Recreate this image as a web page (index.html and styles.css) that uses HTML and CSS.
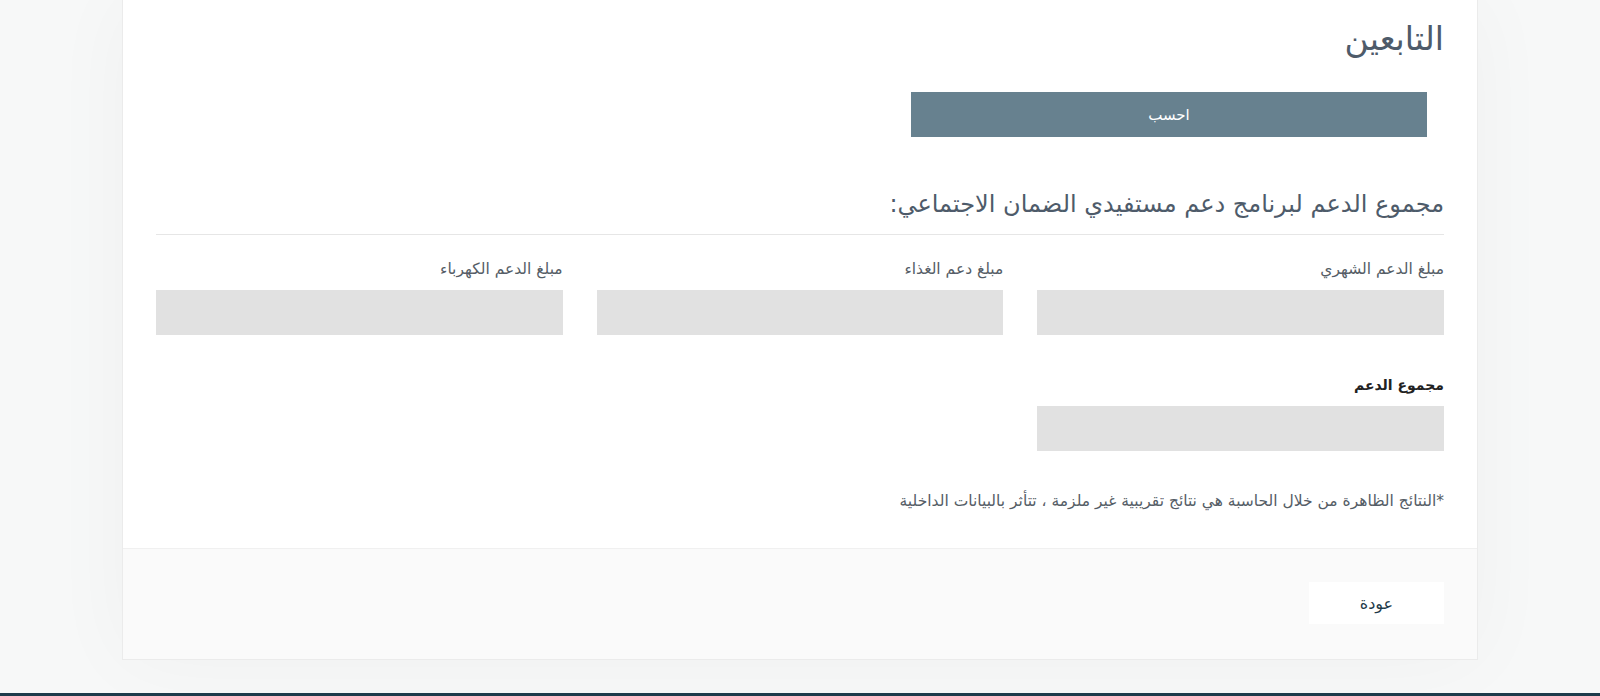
FILE: index.html
```html
<!DOCTYPE html>
<html lang="ar" dir="rtl">
<head>
    <meta charset="UTF-8">
    <meta name="viewport" content="width=device-width, initial-scale=1.0">
    <title>التابعين</title>
    <link rel="stylesheet" href="styles.css">
</head>
<body>
    <div class="page">
        <div class="card">
            <div class="card-body">
                <h2 class="title">التابعين</h2>

                <div class="calc-row">
                    <button class="calc-button" type="button">احسب</button>
                </div>

                <h3 class="section-title">مجموع الدعم لبرنامج دعم مستفيدي الضمان الاجتماعي:</h3>

                <div class="fields">
                    <div class="field">
                        <label>مبلغ الدعم الشهري</label>
                        <div class="field-box"></div>
                    </div>
                    <div class="field">
                        <label>مبلغ دعم الغذاء</label>
                        <div class="field-box"></div>
                    </div>
                    <div class="field">
                        <label>مبلغ الدعم الكهرباء</label>
                        <div class="field-box"></div>
                    </div>
                </div>

                <div class="fields total">
                    <div class="field">
                        <label class="bold">مجموع الدعم</label>
                        <div class="field-box"></div>
                    </div>
                </div>

                <p class="note">*النتائج الظاهرة من خلال الحاسبة هي نتائج تقريبية غير ملزمة ، تتأثر بالبيانات الداخلية</p>
            </div>
            <div class="card-footer">
                <button class="back-button" type="button">عودة</button>
            </div>
        </div>
    </div>
    <div class="bottom-bar"></div>
</body>
</html>
```

FILE: styles.css
```css
html, body {
    height: 100%;
}
body {
    font-family: "DejaVu Sans", sans-serif;
    background-color: #f7f8f8;
    margin: 0;
    padding: 0;
    height: 696px;
    overflow: hidden;
    display: flex;
    flex-direction: column;
}
.page {
    flex: 1;
    padding: 0 122px;
}
.card {
    background-color: #fff;
    border: 1px solid #ebebeb;
    border-top: none;
    box-shadow: 0 0 80px rgba(0, 0, 0, 0.035);
}
.card-body {
    padding: 19px 33px 37px;
}
.title {
    margin: 0;
    font-size: 33px;
    line-height: 40px;
    font-weight: normal;
    color: #4e5b6a;
}
.calc-row {
    display: flex;
    padding-right: 17px;
    margin-top: 33px;
}
.calc-button {
    width: 516px;
    height: 45px;
    border: none;
    background-color: #67818f;
    color: #fff;
    font-family: inherit;
    font-size: 15px;
    cursor: pointer;
}
.section-title {
    margin: 51px 0 0;
    padding-bottom: 14px;
    border-bottom: 1px solid #e6e6e6;
    font-size: 24px;
    line-height: 32px;
    font-weight: normal;
    color: #4e5b6a;
}
.fields {
    display: grid;
    grid-template-columns: repeat(3, 1fr);
    column-gap: 34px;
    margin-top: 24px;
}
.fields.total {
    margin-top: 40px;
}
.field label {
    display: block;
    font-size: 15.5px;
    line-height: 20px;
    color: #555d66;
    margin-bottom: 11px;
}
.field label.bold {
    font-size: 14px;
    font-weight: bold;
    color: #222;
}
.field-box {
    height: 45px;
    background-color: #e1e1e1;
}
.note {
    margin: 40px 0 0;
    font-size: 15.5px;
    line-height: 20px;
    color: #555d66;
}
.card-footer {
    background-color: #fafafa;
    border-top: 1px solid #f0f0f0;
    padding: 33px 33px 35px;
    display: flex;
}
.back-button {
    width: 135px;
    height: 42px;
    border: none;
    background-color: #fff;
    color: #1e3a4a;
    font-family: inherit;
    font-size: 16px;
    cursor: pointer;
}
.bottom-bar {
    height: 3px;
    background-color: #1d3b4b;
}
```
